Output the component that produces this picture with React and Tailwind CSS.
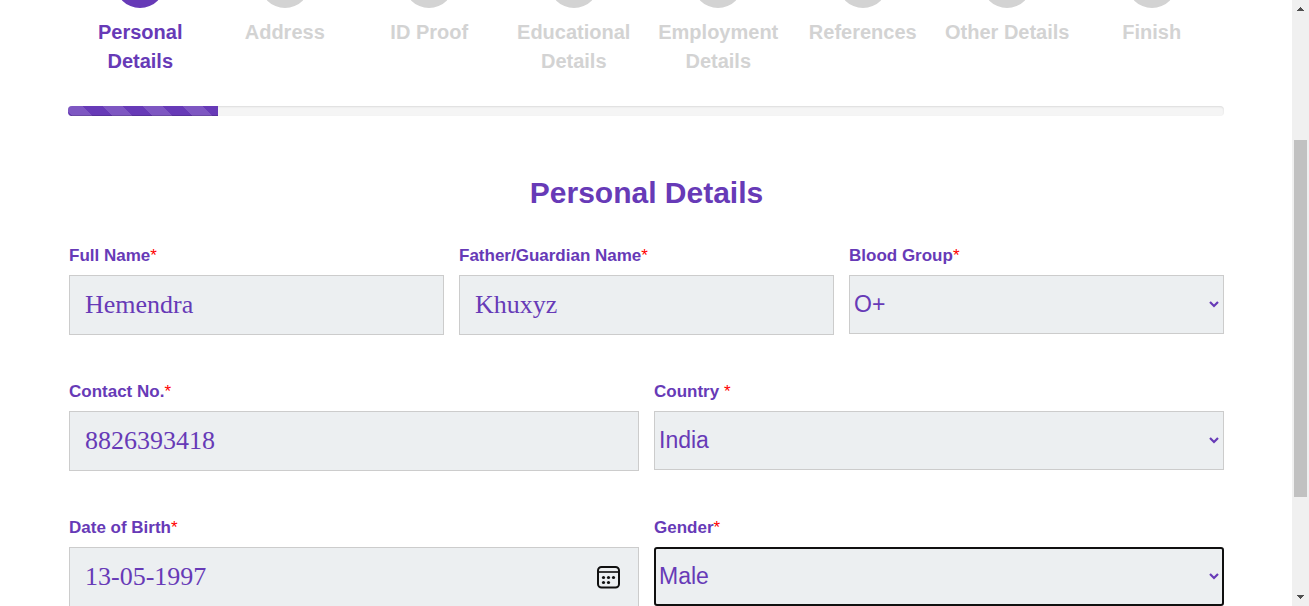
import React, { useState } from "react";

const steps = [
  "Personal Details",
  "Address",
  "ID Proof",
  "Educational Details",
  "Employment Details",
  "References",
  "Other Details",
  "Finish",
];

function Step({ label, active }) {
  return (
    <li
      aria-current={active ? "step" : undefined}
      className={
        active
          ? "flex min-w-0 flex-1 flex-col items-center text-[#673ab7]"
          : "flex min-w-0 flex-1 flex-col items-center text-[#d3d3d3]"
      }
    >
      <div className="flex h-2 items-end overflow-hidden">
        <span className="size-[50px] shrink-0 rounded-full bg-current" />
      </div>
      <span className="mt-[10px] text-center text-[20px] leading-[29px] font-bold">{label}</span>
    </li>
  );
}

function Progress() {
  return (
    <div
      role="progressbar"
      aria-valuenow={13}
      aria-valuemin={0}
      aria-valuemax={100}
      aria-label="Form progress"
      className="mt-[30px] h-[10px] overflow-hidden rounded bg-[#f5f5f5] shadow-[inset_0_1px_2px_rgba(0,0,0,0.1)]"
    >
      <div className="h-full w-[13%] bg-[#673ab7] bg-[linear-gradient(45deg,rgba(255,255,255,0.15)_25%,transparent_25%,transparent_50%,rgba(255,255,255,0.15)_50%,rgba(255,255,255,0.15)_75%,transparent_75%)] bg-[length:40px_40px] bg-[position:-5px_0px] shadow-[inset_0_-1px_0_rgba(0,0,0,0.15)]" />
    </div>
  );
}

function Field({ id, label, children }) {
  return (
    <div className="min-w-0 flex-1">
      <label htmlFor={id} className="mb-[7px] block text-[17px] leading-6 font-bold text-[#673ab7]">
        {label}
        <span className="font-normal text-[#ff0000]">*</span>
      </label>
      {children}
    </div>
  );
}

function TextField({ id, label, initial, type = "text" }) {
  const [value, setValue] = useState(initial);
  return (
    <Field id={id} label={label}>
      <input
        id={id}
        type={type}
        value={value}
        onChange={(e) => setValue(e.target.value)}
        className="block h-[60px] w-full border border-[#cccccc] bg-[#eceff1] px-[15px] font-['Liberation_Serif',serif] text-[26px] text-[#673ab7] outline-none"
      />
    </Field>
  );
}

function SelectField({ id, label, options, focused }) {
  return (
    <Field id={id} label={label}>
      <div
        className={
          focused
            ? "grid h-[59px] items-center rounded-[3px] border-2 border-[#101010] bg-[#eceff1]"
            : "grid h-[59px] items-center border border-[#cccccc] bg-[#eceff1] px-px"
        }
      >
        <select
          id={id}
          className="col-start-1 row-start-1 h-full w-full appearance-none bg-transparent px-[3px] text-[23px] text-[#673ab7] outline-none"
        >
          {options.map((o) => (
            <option key={o}>{o}</option>
          ))}
        </select>
        <svg
          viewBox="0 0 10 8"
          aria-hidden="true"
          className="pointer-events-none col-start-1 row-start-1 mr-[3px] h-2 w-[10px] justify-self-end"
        >
          <path d="M1 1 L5 5 L9 1" fill="none" stroke="#673ab7" strokeWidth="2.2" />
        </svg>
      </div>
    </Field>
  );
}

function CalendarIcon() {
  return (
    <svg viewBox="0 0 24 24" className="size-6" aria-hidden="true">
      <rect x="2" y="2" width="21" height="20.5" rx="3.5" fill="none" stroke="#101010" strokeWidth="2" />
      <path d="M3 7H22" stroke="#3a3a3a" strokeWidth="2" />
      <g fill="#101010">
        <circle cx="7.5" cy="12.5" r="1.6" />
        <circle cx="12.5" cy="12.5" r="1.6" />
        <circle cx="17.5" cy="12.5" r="1.6" />
        <circle cx="7.5" cy="17.5" r="1.6" />
        <circle cx="12.5" cy="17.5" r="1.6" />
      </g>
    </svg>
  );
}

function DateField({ id, label, initial }) {
  const [value, setValue] = useState(initial);
  return (
    <Field id={id} label={label}>
      <div className="flex h-[60px] items-center border border-[#cccccc] bg-[#eceff1] px-[15px]">
        <input
          id={id}
          type="text"
          value={value}
          onChange={(e) => setValue(e.target.value)}
          className="h-full min-w-0 flex-1 bg-transparent font-['Liberation_Serif',serif] text-[26px] text-[#673ab7] outline-none"
        />
        <button type="button" aria-label="Open calendar" className="mr-[3px]">
          <CalendarIcon />
        </button>
      </div>
    </Field>
  );
}

function ScrollTrack() {
  return (
    <div aria-hidden="true" className="flex w-[17px] shrink-0 flex-col items-center justify-between bg-[#f0f0f0] py-[7px]">
      <svg viewBox="0 0 7 4" className="h-1 w-[7px]" shapeRendering="crispEdges">
        <path d="M3 0h1v1h1v1h1v1h1v1H0V3h1V2h1V1h1z" fill="#505050" />
      </svg>
      <div className="flex w-[13px] flex-1 flex-col">
        <div className="flex-[129]" />
        <div className="flex-[357] bg-[#c1c1c1]" />
        <div className="flex-[98]" />
      </div>
      <svg viewBox="0 0 7 4" className="h-1 w-[7px]" shapeRendering="crispEdges">
        <path d="M0 0h7v1H6v1H5v1H4v1H3V3H2V2H1V1H0z" fill="#505050" />
      </svg>
    </div>
  );
}

export default function App() {
  return (
    <div className="flex h-screen overflow-hidden bg-white font-['Liberation_Sans',Arial,sans-serif]">
      <main className="min-w-0 flex-1 overflow-hidden px-[68px]">
        <ol className="flex">
          {steps.map((s, i) => (
            <Step key={s} label={s} active={i === 0} />
          ))}
        </ol>
        <Progress />
        <form className="pl-px">
          <h1 className="mt-[57px] text-center text-[30px] leading-10 font-bold text-[#673ab7]">
            Personal Details
          </h1>
          <div className="mt-[31px] flex flex-col gap-[45px]">
            <div className="flex gap-[15px]">
              <TextField id="name" label="Full Name" initial="Hemendra" />
              <TextField id="guardian" label="Father/Guardian Name" initial="Khuxyz" />
              <SelectField id="blood" label="Blood Group" options={["O+", "A+", "B+", "AB+"]} />
            </div>
            <div className="flex gap-[15px]">
              <TextField id="contact" label="Contact No." type="tel" initial="8826393418" />
              <SelectField id="country" label="Country " options={["India"]} />
            </div>
            <div className="flex gap-[15px]">
              <DateField id="dob" label="Date of Birth" initial="13-05-1997" />
              <SelectField id="gender" label="Gender" options={["Male", "Female"]} focused />
            </div>
          </div>
        </form>
      </main>
      <ScrollTrack />
    </div>
  );
}
